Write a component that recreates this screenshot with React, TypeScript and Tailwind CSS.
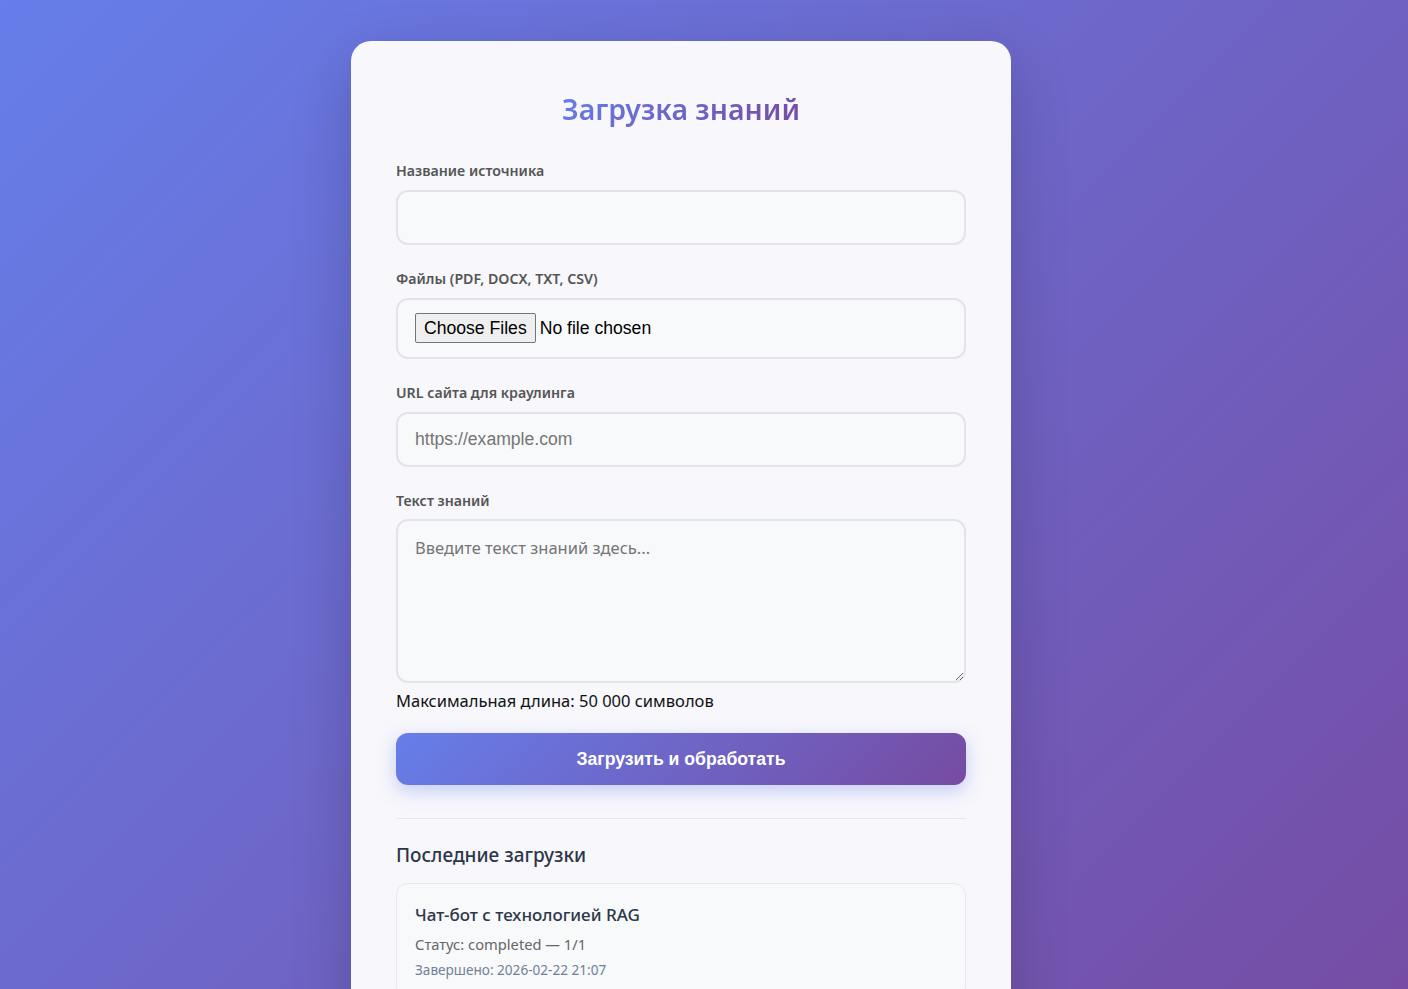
import React from "react";

const sans = { fontFamily: '"Noto Sans", "Open Sans", sans-serif' };
const arial = { fontFamily: '"Liberation Sans", Arial, sans-serif' };

export default function App() {
  return (
    <div
      className="min-h-screen w-full bg-[linear-gradient(135deg,#667eea_0%,#764ba2_100%)] flex pl-[351px] pt-[41px] pb-[40px]"
      style={sans}
    >
      <div className="w-[660px] rounded-[20px] bg-[#f7f7fc] shadow-[0_20px_60px_rgba(0,0,0,0.18)] px-[45px] pt-[50px] pb-[40px]">
        <h1 className="text-center text-[28.5px] leading-[36px] font-semibold mb-[34px]">
          <span className="bg-[linear-gradient(135deg,#667eea_0%,#764ba2_100%)] bg-clip-text text-transparent">
            Загрузка знаний
          </span>
        </h1>

        <div className="mb-[24px]">
          <label className="block text-[14.2px] leading-[20px] font-semibold text-[#555] mb-[9px]">
            Название источника
          </label>
          <input
            type="text"
            className="block w-full h-[55px] rounded-[12px] border-2 border-[#e2e4ea] bg-[#f8f9fb] px-[16px] text-[17.6px] outline-none"
            style={arial}
          />
        </div>

        <div className="mb-[24px]">
          <label className="block text-[14.2px] leading-[20px] font-semibold text-[#555] mb-[9px]">
            Файлы (PDF, DOCX, TXT, CSV)
          </label>
          <input
            type="file"
            multiple
            className="block w-full h-[61px] rounded-[12px] border-2 border-[#e2e4ea] bg-[#f8f9fb] px-[17px] pt-[13px] pb-[15px] text-[17.6px] text-black outline-none file:mr-[4px] file:px-[8px] file:py-[1px] file:border file:border-[#767676] file:rounded-[2px] file:bg-[#efefef] file:text-black"
            style={arial}
          />
        </div>

        <div className="mb-[24px]">
          <label className="block text-[14.2px] leading-[20px] font-semibold text-[#555] mb-[9px]">
            URL сайта для краулинга
          </label>
          <input
            type="url"
            placeholder="https://example.com"
            className="block w-full h-[55px] rounded-[12px] border-2 border-[#e2e4ea] bg-[#f8f9fb] px-[17px] text-[17.6px] outline-none placeholder:text-[#757575]"
            style={arial}
          />
        </div>

        <div className="mb-[20px]">
          <label className="block text-[14.2px] leading-[20px] font-semibold text-[#555] mb-[8px]">
            Текст знаний
          </label>
          <textarea
            placeholder="Введите текст знаний здесь..."
            className="block w-full h-[164px] rounded-[12px] border-2 border-[#e2e4ea] bg-[#f8f9fb] px-[17px] py-[15px] text-[16.5px] leading-[24px] outline-none resize-y placeholder:text-[#757575]"
            style={sans}
          />
          <div className="mt-[6px] text-[16.5px] leading-[24px] text-[#111]">
            Максимальная длина: 50 000 символов
          </div>
        </div>

        <button
          type="button"
          className="block w-full h-[52px] rounded-[12px] bg-[linear-gradient(135deg,#667eea_0%,#764ba2_100%)] text-white text-[17.6px] font-bold shadow-[0_6px_18px_rgba(102,126,234,0.35)]"
          style={arial}
        >
          Загрузить и обработать
        </button>

        <div className="mt-[33px] border-t border-[#e3e8ef] pt-[22px]">
          <h2 className="text-[19px] leading-[28px] font-medium text-[#2d3748] mb-[14px]">
            Последние загрузки
          </h2>
          <div className="rounded-[12px] border border-[#e5e9f0] bg-[#f8f9fb] px-[18px] pt-[18px] pb-[18px]">
            <div className="text-[17px] leading-[26px] font-medium text-[#2d3748] mb-[5px]">
              Чат-бот с технологией RAG
            </div>
            <div className="text-[14.7px] leading-[22px] text-[#666] mb-[5px]">
              Статус: completed — 1/1
            </div>
            <div className="text-[13.6px] leading-[20px] text-[#718096]">
              Завершено: 2026-02-22 21:07
            </div>
          </div>
        </div>
      </div>
    </div>
  );
}
